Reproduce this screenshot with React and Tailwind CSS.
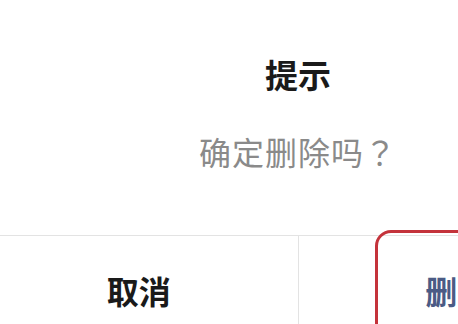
import React from "react";

const font = { fontFamily: '"Noto Sans CJK SC", "Noto Sans", sans-serif' };

const App = () => {
  return (
    <div className="w-[458px] h-[324px] overflow-hidden bg-white" style={font}>
      <div className="ml-[-20px] w-[636px] flex flex-col">
        <h2 className="pt-[54px] text-center text-[33px] leading-[40px] font-bold text-[#1a1a1a]">提示</h2>
        <p className="mt-[37px] text-center text-[32px] leading-[40px] tracking-[1px] text-[#8a8a8a]">
          确定删除吗<span className="[font-family:'Noto_Sans_CJK_TC',sans-serif]">？</span>
        </p>
        <div className="mt-[64px] flex h-[108px] border-t border-[#e3e3e3]">
          <button className="flex-1 flex items-center justify-center border-r border-[#e3e3e3] text-[32px] font-bold text-[#1a1a1a]">
            取消
          </button>
          <button className="relative flex-1 flex items-center justify-center text-[32px] font-bold text-[#4b5b85]">
            删除
            {/* annotation highlight */}
            <span className="absolute left-[76px] top-[-6px] w-[200px] h-[130px] rounded-[16px] border-[3px] border-[#c4333b]"></span>
          </button>
        </div>
      </div>
    </div>
  );
};

export default App;
